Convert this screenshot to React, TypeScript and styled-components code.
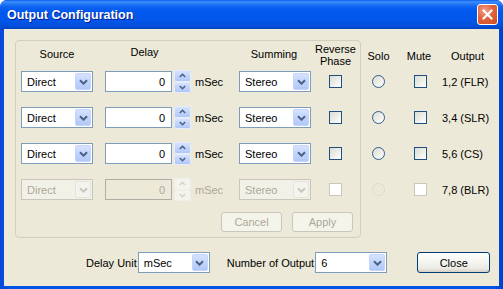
import React from 'react';
import styled, { createGlobalStyle } from 'styled-components';

const Global = createGlobalStyle`
  html, body { margin: 0; padding: 0; width: 503px; height: 289px; overflow: hidden; background: #ffffff; }
  body { font-family: "Liberation Sans", Arial, sans-serif; font-size: 11px; color: #000; }
`;

const Window = styled.div`
  width: 503px;
  height: 289px;
  box-sizing: border-box;
  display: flex;
  flex-direction: column;
  background: linear-gradient(90deg, #0848D8 0%, #0055E5 2%, #0055E5 98%, #0040CC 100%);
  border-radius: 7px 7px 0 0;
  overflow: hidden;
`;

const TitleBar = styled.div`
  height: 29px;
  flex: none;
  display: flex;
  align-items: center;
  justify-content: space-between;
  padding: 0 5px 0 7px;
  background: linear-gradient(180deg, #0A5BF0 0%, #3C8EFB 6%, #2A7CF7 12%, #0C62F0 24%, #0058EE 40%, #0456EA 70%, #0050DC 88%, #0044C4 100%);
`;

const Title = styled.div`
  font-family: "Liberation Sans", Arial, sans-serif;
  font-weight: bold;
  font-size: 12.5px;
  color: #ffffff;
  text-shadow: 1px 1px 0 #0A1E8C;
  margin-top: 1px;
`;

const CloseX = styled.div`
  width: 21px;
  height: 21px;
  box-sizing: border-box;
  border: 1px solid #ffffff;
  border-radius: 3px;
  background: radial-gradient(circle at 35% 30%, #F1A38A 0%, #E2643D 45%, #CC4A1F 100%);
  display: flex;
  align-items: center;
  justify-content: center;
`;

const Client = styled.div`
  flex: 1;
  margin: 0 4px 3px 4px;
  background: #ECE9D8;
  padding: 11px 0 0 11px;
  display: flex;
  flex-direction: column;
`;

const MainRow = styled.div`
  display: flex;
  align-items: flex-start;
`;

const GroupBox = styled.div`
  width: 346px;
  height: 198px;
  box-sizing: border-box;
  border: 1px solid #D0D0BF;
  border-radius: 4px;
  padding: 0 0 5px 5px;
  display: grid;
  grid-template-columns: 84px 134px 72px 49px;
  grid-template-rows: 30px repeat(3, 36px) 33px 20px;
`;

const RightPanel = styled.div`
  display: grid;
  padding-top: 1px;
  grid-template-columns: 35px 46px 57px;
  grid-template-rows: 30px repeat(3, 36px) 33px;
`;

const Head = styled.div<{ $top: number; $w?: number; $pr?: number }>`
  padding-top: ${(p) => p.$top}px;
  width: ${(p) => (p.$w ? `${p.$w}px` : 'auto')};
  padding-right: ${(p) => p.$pr ?? 0}px;
  text-align: center;
  line-height: 12px;
  white-space: nowrap;
`;

const Cell = styled.div<{ $justify?: string; $pl?: number }>`
  height: 21px;
  display: flex;
  align-items: center;
  justify-content: ${(p) => p.$justify ?? 'flex-start'};
  padding-left: ${(p) => p.$pl ?? 0}px;
`;

const Combo = styled.div<{ $disabled?: boolean; $w: number }>`
  width: ${(p) => p.$w}px;
  height: 21px;
  box-sizing: border-box;
  border: 1px solid ${(p) => (p.$disabled ? '#C9C7BA' : '#7F9DB9')};
  background: ${(p) => (p.$disabled ? '#F2F1E8' : '#ffffff')};
  color: ${(p) => (p.$disabled ? '#ACA899' : '#000000')};
  display: flex;
  align-items: center;
  justify-content: space-between;
  padding: 0 1px 0 5px;
`;

const ComboBtn = styled.div<{ $disabled?: boolean }>`
  width: 16px;
  height: 17px;
  box-sizing: border-box;
  border: 1px solid ${(p) => (p.$disabled ? '#E6E5DD' : '#C3D5FD')};
  border-radius: 2px;
  background: ${(p) =>
    p.$disabled ? '#F4F3EE' : 'linear-gradient(180deg, #D6E3FE 0%, #C1D4FB 50%, #B1C8F7 100%)'};
  display: flex;
  align-items: center;
  justify-content: center;
`;

const DelayCell = styled.div`
  height: 21px;
  display: flex;
  align-items: center;
`;

const Edit = styled.div<{ $disabled?: boolean }>`
  width: 67px;
  height: 21px;
  box-sizing: border-box;
  border: 1px solid ${(p) => (p.$disabled ? '#AFAEA6' : '#7F9DB9')};
  background: ${(p) => (p.$disabled ? '#ECE9D8' : '#ffffff')};
  color: ${(p) => (p.$disabled ? '#ACA899' : '#000000')};
  display: flex;
  align-items: center;
  justify-content: flex-end;
  padding-right: 6px;
`;

const Spinner = styled.div`
  width: 17px;
  height: 23px;
  margin-left: 2px;
  display: flex;
  flex-direction: column;
`;

const SpinBtn = styled.div<{ $disabled?: boolean }>`
  flex: 1;
  box-sizing: border-box;
  border: 1px solid ${(p) => (p.$disabled ? '#F0EFE8' : '#E4ECFD')};
  border-radius: 2px;
  background: ${(p) =>
    p.$disabled ? '#F4F3EE' : 'linear-gradient(180deg, #D6E3FE 0%, #C1D4FB 50%, #B1C8F7 100%)'};
  display: flex;
  align-items: center;
  justify-content: center;
`;

const Unit = styled.span<{ $disabled?: boolean }>`
  margin-left: 4px;
  color: ${(p) => (p.$disabled ? '#ACA899' : '#000000')};
`;

const Check = styled.div<{ $disabled?: boolean }>`
  width: 13px;
  height: 13px;
  box-sizing: border-box;
  border: 1px solid ${(p) => (p.$disabled ? '#CAC8BB' : '#1C5180')};
  background: ${(p) =>
    p.$disabled ? '#ffffff' : 'linear-gradient(135deg, #DCDCD7 0%, #EDEDE8 50%, #FFFFFF 100%)'};
`;

const Radio = styled.div<{ $disabled?: boolean }>`
  width: 13px;
  height: 13px;
  box-sizing: border-box;
  border-radius: 50%;
  border: 1px solid ${(p) => (p.$disabled ? '#DDDACD' : '#2F5D8E')};
  background: ${(p) =>
    p.$disabled ? 'transparent' : 'linear-gradient(135deg, #DCDCD7 0%, #EDEDE8 50%, #FFFFFF 100%)'};
`;

const OutText = styled.div`
  height: 21px;
  display: flex;
  align-items: center;
  white-space: nowrap;
`;

const ButtonsRow = styled.div`
  grid-column: 1 / -1;
  display: flex;
  justify-content: flex-end;
  gap: 10px;
  padding-right: 7px;
`;

const PushButton = styled.div<{ $disabled?: boolean; $w: number }>`
  width: ${(p) => p.$w}px;
  height: ${(p) => (p.$disabled ? 20 : 21)}px;
  box-sizing: border-box;
  border: 1px solid ${(p) => (p.$disabled ? '#C9C7BA' : '#003C74')};
  border-radius: 3px;
  background: ${(p) =>
    p.$disabled ? '#F5F4EA' : 'linear-gradient(180deg, #FFFFFF 0%, #F6F6F2 40%, #ECEBE6 80%, #D6D0C5 100%)'};
  color: ${(p) => (p.$disabled ? '#ACA899' : '#000000')};
  display: flex;
  align-items: center;
  justify-content: center;
`;

const BottomRow = styled.div`
  display: flex;
  align-items: center;
  margin-top: 14px;
  margin-left: 71px;
`;

const Label = styled.span<{ $ml?: number }>`
  margin-left: ${(p) => p.$ml ?? 0}px;
  margin-right: 1px;
  white-space: nowrap;
`;

const CloseWrap = styled.div`
  margin-left: 30px;
`;

const Chevron: React.FC<{ disabled?: boolean }> = ({ disabled }) => (
  <svg width="9" height="6" viewBox="0 0 9 6">
    <path d="M1 1.2 L4.5 4.7 L8 1.2" fill="none" stroke={disabled ? '#C9C7BA' : '#4D6185'} strokeWidth="2" />
  </svg>
);

const SpinArrow: React.FC<{ up?: boolean; disabled?: boolean }> = ({ up, disabled }) => (
  <svg width="7" height="5" viewBox="0 0 7 5">
    <path
      d={up ? 'M0.8 4 L3.5 1.3 L6.2 4' : 'M0.8 1 L3.5 3.7 L6.2 1'}
      fill="none"
      stroke={disabled ? '#D5D3C8' : '#4D6185'}
      strokeWidth="1.6"
    />
  </svg>
);

const ComboBox: React.FC<{ value: string; w: number; disabled?: boolean }> = ({ value, w, disabled }) => (
  <Combo $w={w} $disabled={disabled}>
    <span>{value}</span>
    <ComboBtn $disabled={disabled}>
      <Chevron disabled={disabled} />
    </ComboBtn>
  </Combo>
);

const rows = [
  { out: '1,2 (FLR)', disabled: false },
  { out: '3,4 (SLR)', disabled: false },
  { out: '5,6 (CS)', disabled: false },
  { out: '7,8 (BLR)', disabled: true },
];

export default function App() {
  return (
    <>
      <Global />
      <Window>
        <TitleBar>
          <Title>Output Configuration</Title>
          <CloseX>
            <svg width="11" height="11" viewBox="0 0 11 11">
              <path d="M1.5 1.5 L9.5 9.5 M9.5 1.5 L1.5 9.5" stroke="#ffffff" strokeWidth="2.2" strokeLinecap="round" />
            </svg>
          </CloseX>
        </TitleBar>
        <Client>
          <MainRow>
            <GroupBox>
              <Head $top={7} $w={72}>Source</Head>
              <Head $top={5} $w={79}>Delay</Head>
              <Head $top={7} $w={70}>Summing</Head>
              <Head $top={2}>
                Reverse
                <br />
                Phase
              </Head>
              {rows.map((r, i) => (
                <React.Fragment key={i}>
                  <Cell>
                    <ComboBox value="Direct" w={72} disabled={r.disabled} />
                  </Cell>
                  <DelayCell>
                    <Edit $disabled={r.disabled}>0</Edit>
                    <Spinner>
                      <SpinBtn $disabled={r.disabled}>
                        <SpinArrow up disabled={r.disabled} />
                      </SpinBtn>
                      <SpinBtn $disabled={r.disabled}>
                        <SpinArrow disabled={r.disabled} />
                      </SpinBtn>
                    </Spinner>
                    <Unit $disabled={r.disabled}>mSec</Unit>
                  </DelayCell>
                  <Cell>
                    <ComboBox value="Stereo" w={72} disabled={r.disabled} />
                  </Cell>
                  <Cell $justify="center">
                    <Check $disabled={r.disabled} />
                  </Cell>
                </React.Fragment>
              ))}
              <ButtonsRow>
                <PushButton $w={61} $disabled>
                  Cancel
                </PushButton>
                <PushButton $w={61} $disabled>
                  Apply
                </PushButton>
              </ButtonsRow>
            </GroupBox>
            <RightPanel>
              <Head $top={9}>Solo</Head>
              <Head $top={9}>Mute</Head>
              <Head $top={9} $pr={6}>
                Output
              </Head>
              {rows.map((r, i) => (
                <React.Fragment key={i}>
                  <Cell $justify="center">
                    <Radio $disabled={r.disabled} />
                  </Cell>
                  <Cell $pl={18}>
                    <Check $disabled={r.disabled} />
                  </Cell>
                  <OutText>{r.out}</OutText>
                </React.Fragment>
              ))}
            </RightPanel>
          </MainRow>
          <BottomRow>
            <Label>Delay Unit</Label>
            <ComboBox value="mSec" w={72} />
            <Label $ml={17}>Number of Output</Label>
            <ComboBox value="6" w={72} />
            <CloseWrap>
              <PushButton $w={73}>Close</PushButton>
            </CloseWrap>
          </BottomRow>
        </Client>
      </Window>
    </>
  );
}
